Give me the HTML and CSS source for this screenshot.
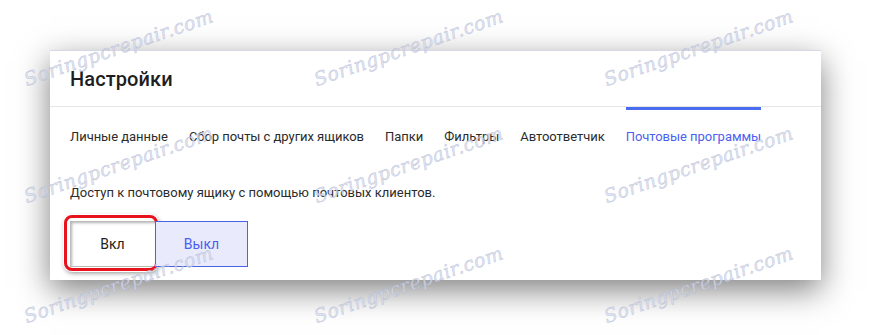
FILE: index.html
```html
<!DOCTYPE html>
<html lang="ru">
<head>
<meta charset="utf-8">
<title>Настройки</title>
<link rel="stylesheet" href="styles.css">
</head>
<body>
<div class="stage">
  <div class="card">
    <div class="head"><h1 class="title">Настройки</h1></div>
    <nav class="tabs">
      <span class="tab">Личные данные</span>
      <span class="tab">Сбор почты с других ящиков</span>
      <span class="tab">Папки</span>
      <span class="tab">Фильтры</span>
      <span class="tab">Автоответчик</span>
      <span class="tab active">Почтовые программы</span>
    </nav>
    <div class="body">
      <p class="desc">Доступ к почтовому ящику с помощью почтовых клиентов.</p>
      <div class="toggle">
        <span class="btn on">Вкл<span class="mark"></span></span>
        <span class="btn off">Выкл</span>
      </div>
    </div>
  </div>
  <span class="wm w1">Soringpcrepair.com</span>
  <span class="wm w2">Soringpcrepair.com</span>
  <span class="wm w3">Soringpcrepair.com</span>
  <span class="wm w4">Soringpcrepair.com</span>
  <span class="wm w5">Soringpcrepair.com</span>
  <span class="wm w6">Soringpcrepair.com</span>
  <span class="wm w7">Soringpcrepair.com</span>
  <span class="wm w8">Soringpcrepair.com</span>
  <span class="wm w9">Soringpcrepair.com</span>
</div>
</body>
</html>
```
FILE: styles.css
```css
html, body { margin: 0; padding: 0; background: #fff; }
body { font-family: Roboto, "Liberation Sans", sans-serif; color: #222; }
.stage { position: relative; width: 870px; height: 335px; overflow: hidden; padding: 50px 0 0 50px; box-sizing: border-box; }
.card {
  width: 771px; height: 230px; background: #fff;
  border-top: 1px solid #d6d8e6;
  box-sizing: border-box;
  box-shadow: 0 10px 30px rgba(0,0,0,0.5);
}
.head { height: 55px; border-bottom: 1px solid #e6e6e9; padding-left: 20px; display: flex; align-items: center; }
.title { margin: 0; font-size: 20px; font-weight: 500; color: #1e1e22; letter-spacing: 0.1px; }
.tabs { display: flex; gap: 21px; padding-left: 20px; height: 58px; }
.tab { font-size: 13px; letter-spacing: -0.04px; color: #2b2b2b; display: flex; align-items: center; border-top: 3px solid transparent; box-sizing: border-box; padding-bottom: 3px; }
.tab.active { color: #4c5ff0; border-top-color: #4a6cf0; }
.body { padding-left: 20px; }
.desc { margin: 20px 0 0; font-size: 13px; color: #2b2b2b; }
.toggle { display: flex; margin-top: 21px; }
.btn { position: relative; height: 46px; display: flex; align-items: center; justify-content: center; font-size: 14px; box-sizing: border-box; }
.btn.on { width: 85px; background: #fff; color: #222; box-shadow: inset 2px 2px 3px rgba(0,0,0,0.3); border-bottom: 1px solid #bbb; }
.btn.off { width: 93px; background: #e9ebfc; color: #4a5ef0; border: 1px solid #4a62e6; }
.mark { position: absolute; left: -6px; top: -6px; width: 94px; height: 56px; box-sizing: border-box; border: 3px solid #e8121c; border-radius: 8px; box-shadow: 0 0 0 1px #fff, 1px 2px 5px rgba(0,0,0,0.45); }
.wm { position: absolute; font-family: "DejaVu Serif", serif; font-style: italic; font-size: 19px; color: rgba(215,220,238,0.75); -webkit-text-stroke: 0.5px rgba(160,168,200,0.55); transform: rotate(-19deg); transform-origin: left bottom; white-space: nowrap; letter-spacing: 0.5px; }
.w1 { left: 28px; top: 68px; }
.w2 { left: 318px; top: 68px; }
.w3 { left: 608px; top: 68px; }
.w4 { left: 28px; top: 185px; }
.w5 { left: 318px; top: 185px; }
.w6 { left: 608px; top: 185px; }
.w7 { left: 28px; top: 305px; }
.w8 { left: 318px; top: 305px; }
.w9 { left: 608px; top: 305px; }
```
